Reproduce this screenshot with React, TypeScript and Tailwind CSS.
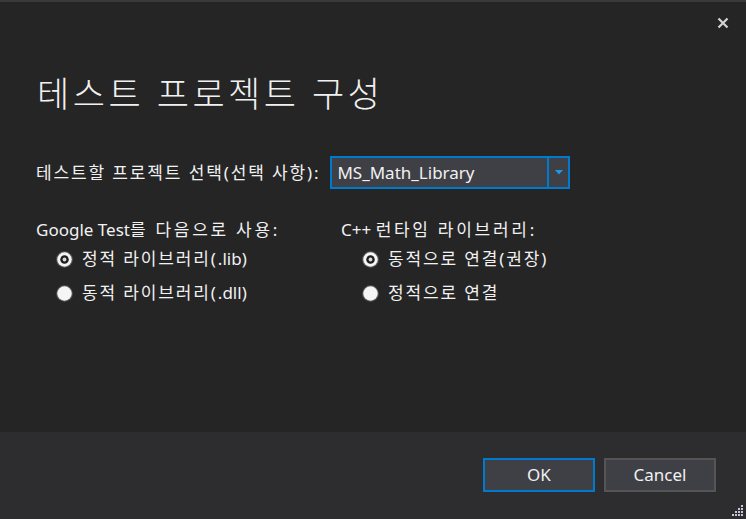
import { useState } from 'react';

const font = { fontFamily: '"Noto Sans", "Noto Sans CJK KR", sans-serif' };

function Radio({ checked, label, onClick }: { checked: boolean; label: React.ReactNode; onClick: () => void }) {
  return (
    <button type="button" onClick={onClick} className="flex items-center gap-[9px] h-[34px] text-left">
      <svg width="17" height="17" viewBox="0 0 16 16">
        <circle cx="8" cy="8" r="7.8" fill="#5a5a5a" />
        <circle cx="8" cy="8" r="6.8" fill="#f5f5f5" />
        {checked && <circle cx="8" cy="8" r="4" fill="#1e1e1e" />}
        {checked && <circle cx="8" cy="8" r="1.8" fill="#d8d8d8" />}
      </svg>
      <span className="text-[17px] text-[#f1f1f1]">{label}</span>
    </button>
  );
}

// Korean runs need a little extra spacing to match the wider system font
function K({ children, wide }: { children: React.ReactNode; wide?: boolean }) {
  return <span className={wide ? 'tracking-[0.16em]' : 'tracking-[0.11em]'}>{children}</span>;
}

export default function App() {
  const [linkage, setLinkage] = useState<'lib' | 'dll'>('lib');
  const [runtime, setRuntime] = useState<'dynamic' | 'static'>('dynamic');

  return (
    <div style={font} className="w-[746px] h-[519px] bg-[#252526] border-t-2 border-[#3a3a3e] flex flex-col text-[#f1f1f1] overflow-hidden">
      <div className="flex-1 flex flex-col relative">
        <button className="absolute right-[17px] top-[15px]" aria-label="close">
          <svg width="12" height="12" viewBox="0 0 12 12">
            <path d="M1.5 1.5 L10.5 10.5 M10.5 1.5 L1.5 10.5" stroke="#d4d4d4" strokeWidth="2.2" />
          </svg>
        </button>

        <h1 className="mt-[67px] ml-[37px] text-[35px] font-light leading-[50px] tracking-[0.1em] text-[#f1f1f1]">테스트 프로젝트 구성</h1>

        <div className="mt-[37px] ml-[36px] flex items-center gap-[10px]">
          <span className="text-[17px] text-[#f1f1f1]"><K>테스트할 프로젝트 선택(선택 사항):</K></span>
          <div className="w-[240px] h-[33px] border-2 border-[#007acc] bg-[#3f3f46] flex">
            <div className="flex-1 flex items-center pl-[5px] text-[17px]">MS_Math_Library</div>
            <div className="w-[21px] border-l-2 border-[#007acc] flex items-center justify-center">
              <svg width="8" height="5" viewBox="0 0 8 5">
                <path d="M0 0 H8 L4 4.5 Z" fill="#1c97ea" />
              </svg>
            </div>
          </div>
        </div>

        <div className="mt-[29px] ml-[36px] flex">
          <div className="w-[305px] flex flex-col">
            <span className="text-[17px] leading-[24px]">Google Test<K wide>를 다음으로 사용:</K></span>
            <div className="ml-[20px] mt-[0px] flex flex-col">
              <Radio checked={linkage === 'lib'} label={<><K>정적 라이브러리(</K>.lib)</>} onClick={() => setLinkage('lib')} />
              <Radio checked={linkage === 'dll'} label={<><K>동적 라이브러리(</K>.dll)</>} onClick={() => setLinkage('dll')} />
            </div>
          </div>
          <div className="flex flex-col">
            <span className="text-[17px] leading-[24px]">C++ <K wide>런타임 라이브러리:</K></span>
            <div className="ml-[21px] mt-[0px] flex flex-col">
              <Radio checked={runtime === 'dynamic'} label={<K>동적으로 연결(권장)</K>} onClick={() => setRuntime('dynamic')} />
              <Radio checked={runtime === 'static'} label={<K>정적으로 연결</K>} onClick={() => setRuntime('static')} />
            </div>
          </div>
        </div>
      </div>

      <div className="h-[87px] bg-[#2d2d30] flex items-start justify-end gap-[9px] pr-[30px] pt-[26px] relative">
        <button className="w-[112px] h-[34px] border-2 border-[#007acc] bg-[#3f3f46] text-[17px] text-[#f1f1f1]">OK</button>
        <button className="w-[112px] h-[34px] border-2 border-[#555555] bg-[#3f3f46] text-[17px] text-[#f1f1f1]">Cancel</button>
        <svg className="absolute right-[2px] bottom-[2px]" width="14" height="14" viewBox="0 0 14 14">
          {[
            [11, 0], [11, 3], [8, 3], [11, 6], [8, 6], [5, 6], [11, 9], [8, 9], [5, 9], [2, 9],
          ].map(([x, y], i) => (
            <rect key={i} x={x} y={y + 2} width="2" height="2" fill="#c8c8d8" />
          ))}
        </svg>
      </div>
    </div>
  );
}
